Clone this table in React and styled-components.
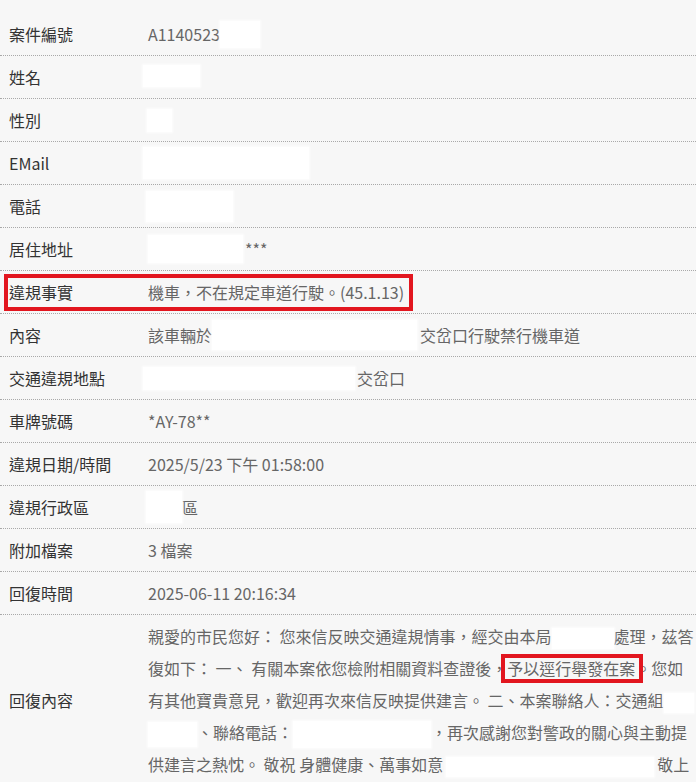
import React from "react";
import styled, { createGlobalStyle } from "styled-components";

const Global = createGlobalStyle`
  html, body { margin: 0; padding: 0; background: #f7f7f7; }
  body { overflow-x: hidden; font-family: "Noto Sans CJK TC", "Noto Sans", sans-serif; }
`;

const Table = styled.div`
  padding-top: 13px;
  font-size: 16px;
`;

const Row = styled.div`
  position: relative;
  box-sizing: border-box;
  display: grid;
  grid-template-columns: 139px 1fr;
  align-items: center;
  height: ${(p) => (p.$tall ? "auto" : "43px")};
  border-bottom: 1px dotted #a9a9a9;
  ${(p) =>
    p.$marked &&
    `
    &::after {
      content: "";
      position: absolute;
      left: 4px;
      top: 3px;
      bottom: 2px;
      width: 409px;
      box-sizing: border-box;
      border: 4px solid #e2161f;
      pointer-events: none;
    }
  `}
`;

const Label = styled.div`
  padding-left: 9px;
  height: 28px;
  line-height: 28px;
  color: #333;
  white-space: nowrap;
`;

const Value = styled.div`
  display: flex;
  align-items: center;
  padding-left: 9px;
  height: 28px;
  line-height: 28px;
  color: #666;
  white-space: nowrap;
`;

const Reply = styled.div`
  padding: 5px 0 5px 9px;
  line-height: 32px;
  color: #666;
  width: 548px;
`;

const Redact = styled.span`
  display: inline-block;
  vertical-align: middle;
  flex: none;
  width: ${(p) => p.$w}px;
  height: ${(p) => p.$h}px;
  margin-left: ${(p) => p.$ml || 0}px;
  margin-right: ${(p) => p.$mr || 0}px;
  background: #fff;
  box-shadow: 0 0 2px 1px rgba(255, 255, 255, 0.8);
  position: relative;
  top: ${(p) => p.$dy || 0}px;
`;

const Mark = styled.span`
  position: relative;
  &::after {
    content: "";
    position: absolute;
    left: -6px;
    right: -8px;
    top: -2px;
    bottom: -3px;
    border: 4px solid #e2161f;
    pointer-events: none;
  }
`;

export default function App() {
  return (
    <>
      <Global />
      <Table>
        <Row>
          <Label>案件編號</Label>
          <Value>
            A1140523
            <Redact $w={40} $h={27} />
          </Value>
        </Row>
        <Row>
          <Label>姓名</Label>
          <Value>
            <Redact $w={57} $h={22} $ml={-5} $dy={-1} />
          </Value>
        </Row>
        <Row>
          <Label>性別</Label>
          <Value>
            <Redact $w={25} $h={23} $ml={-1} />
          </Value>
        </Row>
        <Row>
          <Label>EMail</Label>
          <Value>
            <Redact $w={166} $h={32} $ml={-5} />
          </Value>
        </Row>
        <Row>
          <Label>電話</Label>
          <Value>
            <Redact $w={87} $h={31} $ml={-2} />
          </Value>
        </Row>
        <Row>
          <Label>居住地址</Label>
          <Value>
            <Redact $w={95} $h={28} $mr={2} />
            ***
          </Value>
        </Row>
        <Row $marked>
          <Label>違規事實</Label>
          <Value>機車，不在規定車道行駛。(45.1.13)</Value>
        </Row>
        <Row>
          <Label>內容</Label>
          <Value>
            該車輛於
            <Redact $w={205} $h={30} $mr={3} />
            交岔口行駛禁行機車道
          </Value>
        </Row>
        <Row>
          <Label>交通違規地點</Label>
          <Value>
            <Redact $w={212} $h={23} $ml={-5} $mr={2} />
            交岔口
          </Value>
        </Row>
        <Row>
          <Label>車牌號碼</Label>
          <Value>*AY-78**</Value>
        </Row>
        <Row>
          <Label>違規日期/時間</Label>
          <Value>2025/5/23 下午 01:58:00</Value>
        </Row>
        <Row>
          <Label>違規行政區</Label>
          <Value>
            <Redact $w={36} $h={32} $ml={-2} />
            區
          </Value>
        </Row>
        <Row>
          <Label>附加檔案</Label>
          <Value>3 檔案</Value>
        </Row>
        <Row>
          <Label>回復時間</Label>
          <Value>2025-06-11 20:16:34</Value>
        </Row>
        <Row $tall>
          <Label>回復內容</Label>
          <Reply>
            親愛的市民您好： 您來信反映交通違規情事，經交由本局
            <Redact $w={62} $h={21} />
            處理，茲答復如下： 一、 有關本案依您檢附相關資料查證後，
            <Mark>予以逕行舉發在案</Mark>
            。您如有其他寶貴意見，歡迎再次來信反映提供建言。 二、本案聯絡人：交通組
            <Redact $w={30} $h={20} />
            <Redact $w={49} $h={25} />
            、聯絡電話：
            <Redact $w={138} $h={27} />
            ，再次感謝您對警政的關心與主動提供建言之熱忱。 敬祝 身體健康、萬事如意
            <Redact $w={208} $h={20} $ml={3} $mr={3} />
            敬上
          </Reply>
        </Row>
      </Table>
    </>
  );
}
